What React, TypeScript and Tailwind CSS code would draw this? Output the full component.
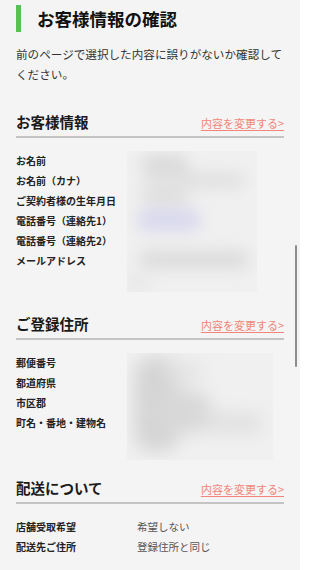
import React from "react";

const font = { fontFamily: '"Noto Sans CJK JP", "Noto Sans", sans-serif' };

function SectionHeader({ title, mt }: { title: string; mt: string }) {
  return (
    <div className={mt}>
      <div className="flex items-center justify-between h-[22px]">
        <h2 className="text-[14.5px] font-bold text-[#1a1a1a] leading-[22px]">{title}</h2>
        <a className="text-[11px] leading-[22px] text-[#f2857a] underline underline-offset-2 pt-[2px]">
          内容を変更する&gt;
        </a>
      </div>
      <div className="mt-[3px] h-[2px] bg-[#c4c4c4]" />
    </div>
  );
}

function Labels({ items }: { items: string[] }) {
  return (
    <div className="flex flex-col w-[111px] shrink-0">
      {items.map((t) => (
        <div key={t} className="h-[20px] leading-[20px] text-[10px] font-bold text-[#222] whitespace-nowrap">
          {t}
        </div>
      ))}
    </div>
  );
}

function Blur1() {
  return (
    <svg width="130" height="141" viewBox="0 0 130 141" className="block">
      <defs>
        <filter id="b1" x="-50%" y="-50%" width="200%" height="200%">
          <feGaussianBlur stdDeviation="8" />
        </filter>
        <clipPath id="c1">
          <rect width="130" height="141" />
        </clipPath>
      </defs>
      <rect width="130" height="141" fill="#f0f0f0" />
      <g filter="url(#b1)" clipPath="url(#c1)">
        <rect x="14" y="4" width="48" height="22" rx="10" fill="#dadada" />
        <rect x="56" y="22" width="62" height="15" rx="7" fill="#dfdfdf" />
        <rect x="14" y="30" width="48" height="24" rx="10" fill="#e0e0e0" />
        <rect x="10" y="58" width="64" height="22" rx="10" fill="#d8d8ee" />
        <rect x="12" y="100" width="110" height="17" rx="8" fill="#dadada" />
        <rect x="0" y="124" width="22" height="16" rx="6" fill="#e6e6e6" />
      </g>
    </svg>
  );
}

function Blur2() {
  return (
    <svg width="146" height="107" viewBox="0 0 146 107" className="block">
      <defs>
        <filter id="b2" x="-50%" y="-50%" width="200%" height="200%">
          <feGaussianBlur stdDeviation="9" />
        </filter>
        <clipPath id="c2">
          <rect width="146" height="107" />
        </clipPath>
      </defs>
      <rect width="146" height="107" fill="#f0f0f0" />
      <g filter="url(#b2)" clipPath="url(#c2)">
        <rect x="8" y="4" width="44" height="94" rx="16" fill="#d4d4d4" />
        <rect x="28" y="38" width="56" height="42" rx="16" fill="#d8d8d8" />
        <rect x="76" y="60" width="60" height="20" rx="9" fill="#e0e0e0" />
        <rect x="40" y="8" width="34" height="22" rx="9" fill="#e3e3e3" />
      </g>
    </svg>
  );
}

export default function App() {
  return (
    <div className="relative h-[570px] w-[300px] overflow-hidden bg-[#f4f4f4]" style={font}>
      <div className="px-4 pt-[5px]">
        <div className="flex items-center h-[27px] border-l-[5px] border-[#57c157] pl-4">
          <h1 className="text-[17.5px] font-bold text-[#111] leading-none">お客様情報の確認</h1>
        </div>
        <p className="mt-[12px] text-[11.6px] leading-[20px] text-[#333]">
          前のページで選択した内容に誤りがないか確認してください。
        </p>

        <SectionHeader title="お客様情報" mt="mt-[27px]" />
        <div className="mt-[13px] flex">
          <Labels
            items={[
              "お名前",
              "お名前（カナ）",
              "ご契約者様の生年月日",
              "電話番号（連絡先1）",
              "電話番号（連絡先2）",
              "メールアドレス",
            ]}
          />
          <Blur1 />
        </div>

        <SectionHeader title="ご登録住所" mt="mt-[21px]" />
        <div className="mt-[13px] flex">
          <Labels items={["郵便番号", "都道府県", "市区郡", "町名・番地・建物名"]} />
          <Blur2 />
        </div>

        <SectionHeader title="配送について" mt="mt-[17px]" />
        <div className="mt-[13px] flex flex-col">
          {[
            ["店舗受取希望", "希望しない"],
            ["配送先ご住所", "登録住所と同じ"],
          ].map(([a, b]) => (
            <div key={a} className="flex h-[20px] leading-[20px]">
              <div className="w-[121px] shrink-0 text-[10px] font-bold text-[#222]">{a}</div>
              <div className="text-[10.5px] text-[#555]">{b}</div>
            </div>
          ))}
        </div>
      </div>
      <div className="absolute left-[295px] top-[245px] w-[2px] h-[122px] bg-[#8c8c8c] rounded-full" />
    </div>
  );
}
